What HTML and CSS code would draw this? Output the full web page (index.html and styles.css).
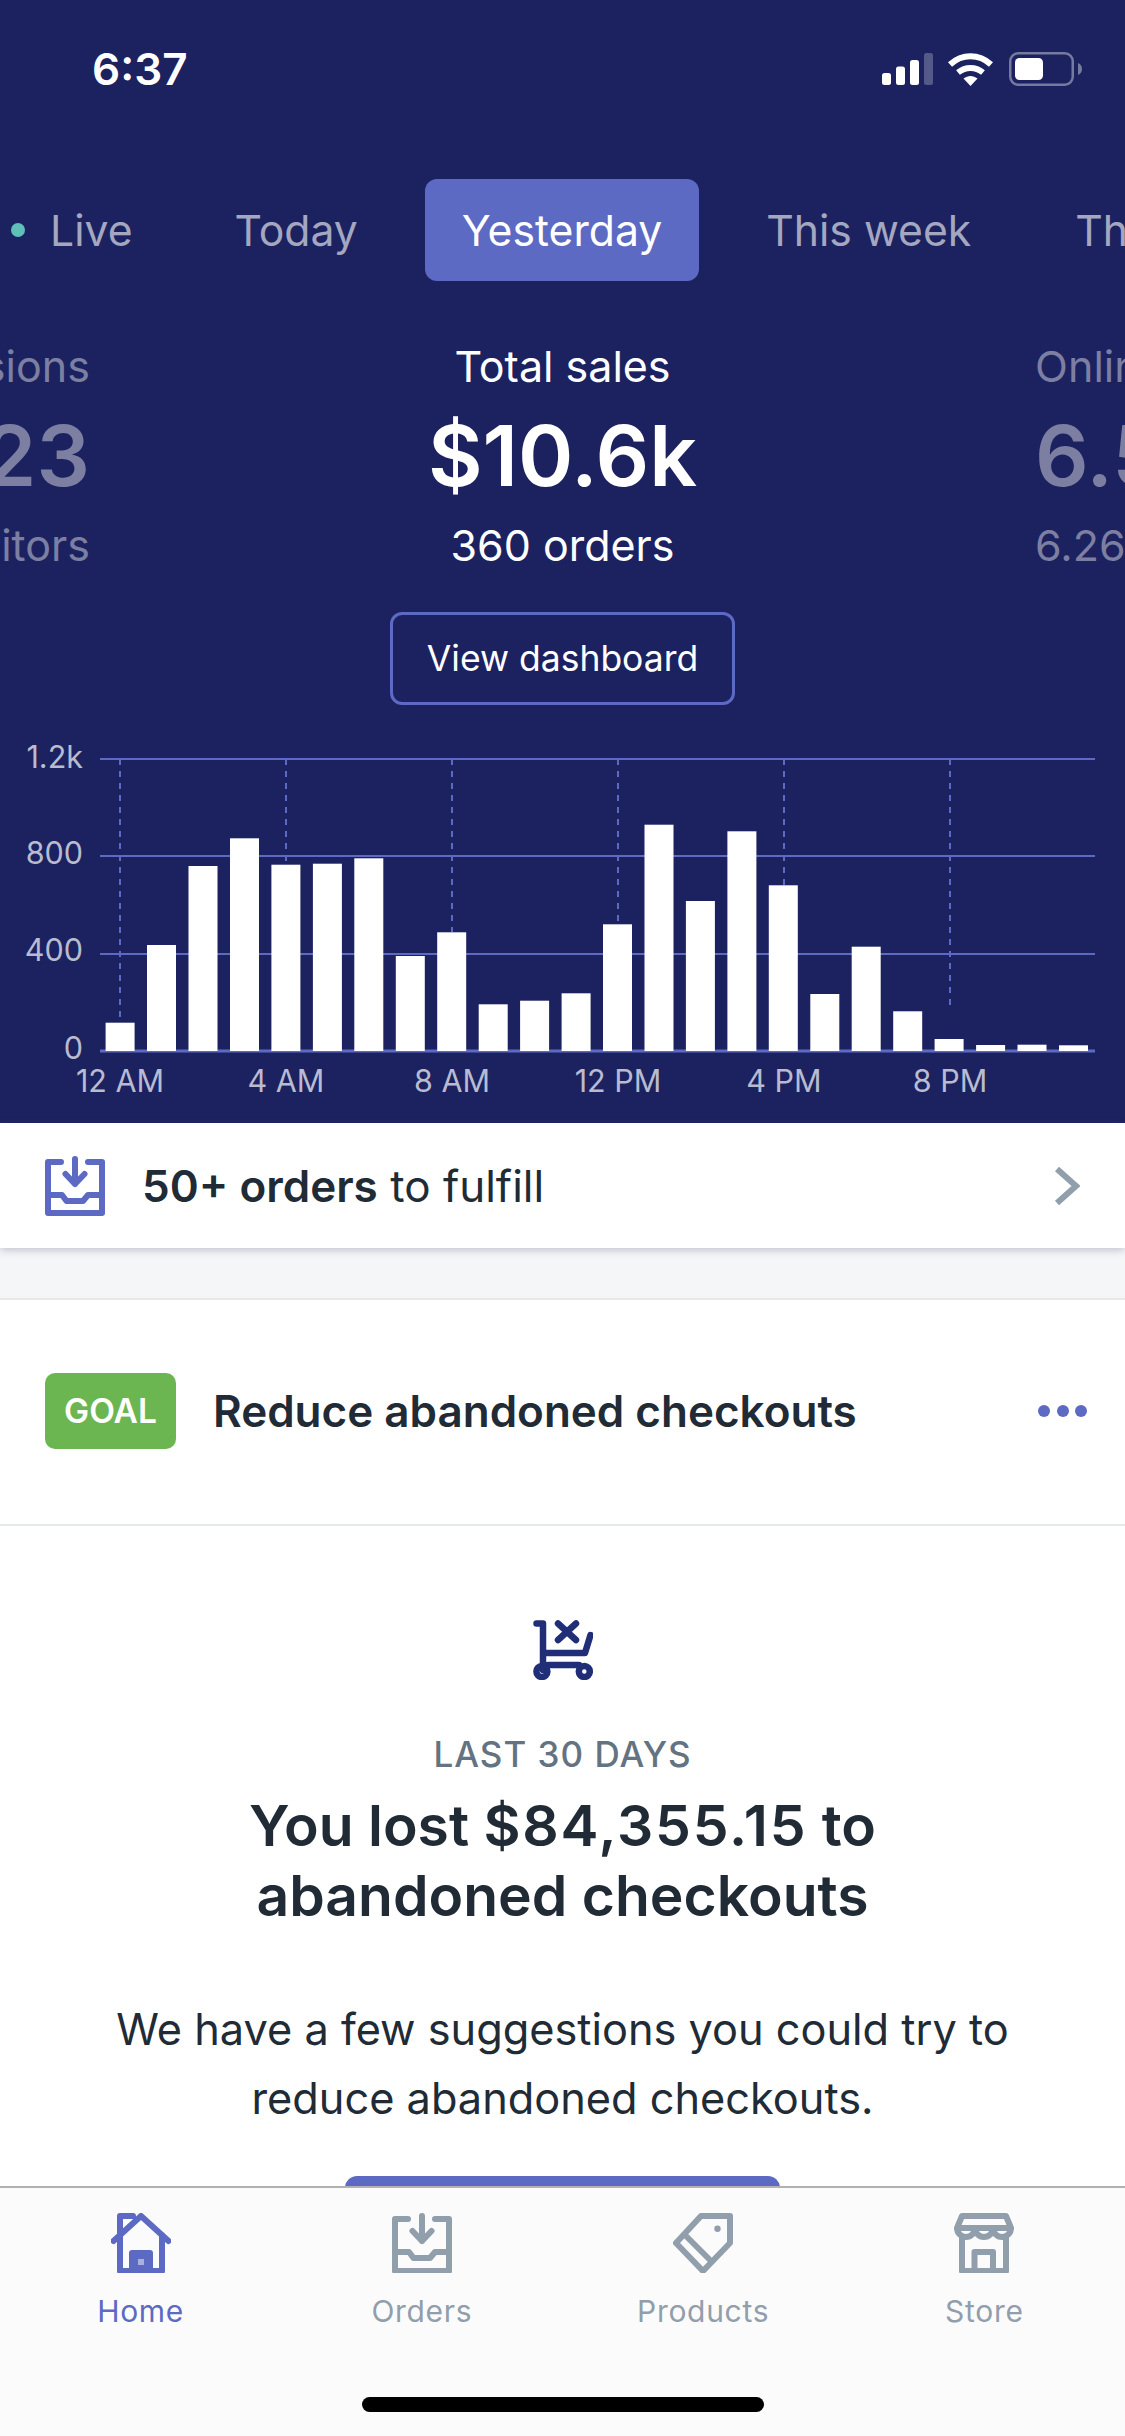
FILE: index.html
```html
<!DOCTYPE html>
<html lang="en">
<head>
  <meta charset="UTF-8">
  <meta name="viewport" content="width=device-width, initial-scale=1.0">
  <title>Home</title>
  <link rel="stylesheet" href="styles.css">
</head>
<body>
<div class="screen">
  <div class="content">
    <div class="hero">
      <div class="status-bar">
        <span class="time">6:37</span>
        <div class="status-icons">
          <svg class="signal" width="51" height="32" viewBox="0 0 51 32">
            <rect x="0" y="20" width="9" height="12" rx="2.5" fill="#fff"/>
            <rect x="14" y="13.5" width="9" height="18.5" rx="2.5" fill="#fff"/>
            <rect x="28" y="7" width="9" height="25" rx="2.5" fill="#fff"/>
            <rect x="42" y="0" width="9" height="32" rx="2.5" fill="#fff" opacity="0.25"/>
          </svg>
          <svg class="wifi" width="45" height="33" viewBox="0 0 45 33">
            <path d="M2 11.5C14 0.5 31 0.5 43 11.5" fill="none" stroke="#fff" stroke-width="6"/>
            <path d="M10 19.5C17.500 13.500 27.500 13.500 35 19.5" fill="none" stroke="#fff" stroke-width="6"/>
            <path d="M15.500 25.500C20 22 25 22 29.500 25.500L22.500 33Z" fill="#fff"/>
          </svg>
          <svg class="battery" width="73" height="34" viewBox="0 0 73 34">
            <rect x="1.250" y="1.250" width="62.500" height="31.500" rx="8" fill="none" stroke="#fff" stroke-opacity="0.4" stroke-width="2.500"/>
            <rect x="6" y="6" width="28" height="22" rx="4.500" fill="#fff"/>
            <path d="M69 11C71.500 12 73 14 73 17C73 20 71.500 22 69 23Z" fill="#fff" fill-opacity="0.4"/>
          </svg>
        </div>
      </div>

      <div class="tabs">
        <div class="tab tab-live"><span class="live-dot"></span>Live</div>
        <div class="tab">Today</div>
        <div class="tab tab-active">Yesterday</div>
        <div class="tab">This week</div>
        <div class="tab">This month</div>
      </div>

      <div class="stats">
        <div class="stat stat-side stat-left">
          <div class="stat-label">Sessions</div>
          <div class="stat-value">1,123</div>
          <div class="stat-sub">821 visitors</div>
        </div>
        <div class="stat">
          <div class="stat-label">Total sales</div>
          <div class="stat-value">$10.6k</div>
          <div class="stat-sub">360 orders</div>
        </div>
        <div class="stat stat-side stat-right">
          <div class="stat-label">Online store</div>
          <div class="stat-value">6.5k</div>
          <div class="stat-sub">6.26k visitors</div>
        </div>
      </div>

      <div class="dash-wrap">
        <button class="dash-btn">View dashboard</button>
      </div>

      <svg class="chart" width="1125" height="381" viewBox="0 0 1125 381">
        <g class="grid">
          <line x1="100" y1="23" x2="1095" y2="23"/>
          <line x1="100" y1="120" x2="1095" y2="120"/>
          <line x1="100" y1="218" x2="1095" y2="218"/>
          <line class="grid-base" x1="100" y1="315" x2="1095" y2="315"/>
        </g>
        <g class="ticks">
          <line x1="120" y1="23" x2="120" y2="287"/>
          <line x1="286" y1="23" x2="286" y2="129"/>
          <line x1="452" y1="23" x2="452" y2="196"/>
          <line x1="618" y1="23" x2="618" y2="188"/>
          <line x1="784" y1="23" x2="784" y2="149"/>
          <line x1="950" y1="23" x2="950" y2="275"/>
        </g>
        <g class="bars">
          <rect x="105.600" y="286.700" width="29" height="28.300"/>
          <rect x="147" y="209" width="29" height="106"/>
          <rect x="188.500" y="130" width="29" height="185"/>
          <rect x="230" y="102.300" width="29" height="212.700"/>
          <rect x="271.400" y="128.700" width="29" height="186.300"/>
          <rect x="312.900" y="127.700" width="29" height="187.300"/>
          <rect x="354.300" y="122.300" width="29" height="192.700"/>
          <rect x="395.800" y="220" width="29" height="95"/>
          <rect x="437.200" y="196.300" width="29" height="118.700"/>
          <rect x="478.700" y="268.300" width="29" height="46.700"/>
          <rect x="520.100" y="264.700" width="29" height="50.300"/>
          <rect x="561.600" y="257.300" width="29" height="57.700"/>
          <rect x="603" y="188.300" width="29" height="126.700"/>
          <rect x="644.500" y="88.700" width="29" height="226.300"/>
          <rect x="685.900" y="165" width="29" height="150"/>
          <rect x="727.400" y="95.300" width="29" height="219.700"/>
          <rect x="768.800" y="149.300" width="29" height="165.700"/>
          <rect x="810.300" y="258" width="29" height="57"/>
          <rect x="851.700" y="210.700" width="29" height="104.300"/>
          <rect x="893.200" y="275.300" width="29" height="39.700"/>
          <rect x="934.600" y="303" width="29" height="12"/>
          <rect x="976.100" y="309" width="29" height="6"/>
          <rect x="1017.500" y="308.700" width="29" height="6.300"/>
          <rect x="1059" y="309.300" width="29" height="5.700"/>
        </g>
        <g class="y-labels">
          <text x="83" y="32">1.2k</text>
          <text x="83" y="128">800</text>
          <text x="83" y="225">400</text>
          <text x="83" y="323">0</text>
        </g>
        <g class="x-labels">
          <text x="120" y="356">12 AM</text>
          <text x="286" y="356">4 AM</text>
          <text x="452" y="356">8 AM</text>
          <text x="618" y="356">12 PM</text>
          <text x="784" y="356">4 PM</text>
          <text x="950" y="356">8 PM</text>
        </g>
      </svg>
    </div>

    <div class="orders-row">
      <svg class="icon orders-icon" width="60" height="60" viewBox="0 0 60 60">
        <path d="M16 6H3V57H57V6H43M30 3V28M20.500 18L30 28L39.500 18M3 39H17L21.500 45H38L43 39H57"/>
      </svg>
      <div class="orders-text"><b>50+ orders</b> to fulfill</div>
      <svg class="chevron" width="26" height="40" viewBox="0 0 26 40">
        <path d="M3 3L22 20L3 37"/>
      </svg>
    </div>

    <div class="spacer"></div>

    <div class="goal-row">
      <span class="goal-badge">GOAL</span>
      <div class="goal-title">Reduce abandoned checkouts</div>
      <div class="dots"><span></span><span></span><span></span></div>
    </div>

    <div class="insight">
      <svg class="cart-icon" width="60" height="60" viewBox="0 0 60 60">
        <path d="M3.500 3.500H10V50M10 33H52L57.500 15M25 3.500L43 20M43 3.500L25 20M15 45H46"/>
        <circle cx="8.900" cy="51.500" r="5.500"/>
        <circle cx="51.300" cy="51.500" r="5.500"/>
      </svg>
      <div class="insight-label">LAST 30 DAYS</div>
      <h2 class="insight-title">You lost <span class="insight-amount">$84,355.15</span> to<br>abandoned checkouts</h2>
      <p class="insight-text">We have a few suggestions you could try to<br>reduce abandoned checkouts.</p>
      <button class="insight-btn">View suggestions</button>
    </div>
  </div>

  <div class="tabbar">
    <div class="tabbar-items">
      <div class="tabbar-item tabbar-item-active">
        <svg class="icon" width="60" height="60" viewBox="0 0 60 60">
          <path class="door-fill" d="M24 43H36V55H24Z"/>
          <path d="M2.500 28L30 3L57.500 28M9 20V3H22M9 22V58H51V22M21 58V40H39V58"/>
        </svg>
        <span>Home</span>
      </div>
      <div class="tabbar-item">
        <svg class="icon" width="60" height="60" viewBox="0 0 60 60">
          <path d="M16 6H3V58H57V6H43M30 3V28M20.500 18L30 28L39.500 18M3 39H17L21.500 45H38L43 39H57"/>
        </svg>
        <span>Orders</span>
      </div>
      <div class="tabbar-item">
        <svg class="icon" width="60" height="60" viewBox="0 0 60 60">
          <path d="M28 3H57V30L30 58L3 30ZM14 24L37 47"/>
          <circle class="tag-hole" cx="44.500" cy="15.700" r="3.200"/>
        </svg>
        <span>Products</span>
      </div>
      <div class="tabbar-item">
        <svg class="icon" width="60" height="60" viewBox="0 0 60 60">
          <path d="M8 3H52L57 15H3ZM3 15A9 9 0 0 0 21 15A9 9 0 0 0 39 15A9 9 0 0 0 57 15M8 25V58H52V25M20.500 58V39H39V58"/>
        </svg>
        <span>Store</span>
      </div>
    </div>
    <div class="home-indicator"></div>
  </div>
</div>
</body>
</html>
```

FILE: styles.css
```css
body {
  margin: 0;
  font-family: Inter, "Noto Sans", sans-serif;
  color: #212b36;
  background: #fff;
}

.screen {
  width: 1125px;
  height: 2436px;
  display: flex;
  flex-direction: column;
  overflow: hidden;
}

.content {
  flex: 1;
  min-height: 0;
  overflow: hidden;
}

/* hero */
.hero {
  background: #1c2260;
  height: 1123px;
  color: #fff;
  overflow: hidden;
}

.status-bar {
  height: 138px;
  display: flex;
  align-items: center;
  justify-content: space-between;
  padding: 0 43px 0 92px;
}

.time {
  font-size: 44px;
  font-weight: 600;
}

.status-icons {
  display: flex;
  align-items: center;
  gap: 15px;
}

.wifi {
  margin-right: 1px;
}

.tabs {
  margin-top: 41px;
  padding-left: 11px;
  display: flex;
  gap: 30px;
  height: 102px;
  white-space: nowrap;
  overflow: hidden;
}

.tab {
  flex: none;
  display: flex;
  align-items: center;
  padding: 0 37px;
  font-size: 42.700px;
  color: #a4a7bf;
  border-radius: 12px;
}

.tab-live {
  padding: 0 35px 0 0;
}

.live-dot {
  width: 14px;
  height: 14px;
  border-radius: 50%;
  background: #5fbfb9;
  margin-right: 25px;
}

.tab-active {
  background: #5c6ac4;
  color: #fff;
}

.stats {
  margin-top: 60px;
  display: grid;
  grid-template-columns: minmax(0, 1fr) auto minmax(0, 1fr);
  column-gap: 338px;
  overflow: hidden;
  white-space: nowrap;
  text-align: center;
}

.stat-side {
  color: #7c7fa2;
}

.stat-left {
  justify-self: end;
  text-align: right;
}

.stat-right {
  justify-self: start;
  text-align: left;
}

.stat-label,
.stat-sub {
  font-size: 43px;
  line-height: 50px;
}

.stat-value {
  font-size: 84px;
  font-weight: 600;
  line-height: 96px;
  margin: 17px 0 16px;
}

.dash-wrap {
  display: flex;
  justify-content: center;
  margin-top: 42px;
}

.dash-btn {
  width: 345px;
  height: 93px;
  background: none;
  border: 3px solid #5c6ac4;
  border-radius: 12px;
  color: #fff;
  font-family: inherit;
  font-size: 35.500px;
}

/* chart */
.chart {
  display: block;
  margin-top: 31px;
}

.grid line {
  stroke: #5c6ac4;
  stroke-width: 2;
}

.grid .grid-base {
  stroke-width: 3;
}

.ticks line {
  stroke: #5c6ac4;
  stroke-width: 2;
  stroke-dasharray: 6 6;
}

.bars rect {
  fill: #fff;
}

.y-labels text,
.x-labels text {
  font-size: 30.500px;
  fill: #b9bbd0;
}

.y-labels text {
  text-anchor: end;
}

.x-labels text {
  text-anchor: middle;
}

/* orders row */
.orders-row {
  height: 125px;
  padding: 0 45px;
  display: flex;
  align-items: center;
  box-shadow: 0 2px 8px rgba(66, 71, 112, 0.3);
  position: relative;
  background: #fff;
}

.orders-text {
  flex: 1;
  margin-left: 37px;
  font-size: 44px;
}

.orders-text b {
  font-weight: 600;
}

.icon path {
  fill: none;
  stroke: #919eab;
  stroke-width: 6;
  stroke-linejoin: round;
  stroke-linecap: round;
}

.orders-icon path {
  stroke: #5c6ac4;
}

.chevron path {
  fill: none;
  stroke: #919eab;
  stroke-width: 6;
}

.spacer {
  height: 50px;
  background: #f4f6f8;
}

/* goal */
.goal-row {
  height: 228px;
  padding: 0 38px 2px 45px;
  display: flex;
  align-items: center;
  border-top: 2px solid #e6e9ec;
  border-bottom: 2px solid #e6e9ec;
  box-sizing: border-box;
}

.goal-badge {
  width: 131px;
  height: 76px;
  display: flex;
  align-items: center;
  justify-content: center;
  background: #6cb651;
  border-radius: 10px;
  color: #fff;
  font-size: 33.500px;
  font-weight: 600;
}

.goal-title {
  flex: 1;
  margin-left: 37px;
  font-size: 44px;
  font-weight: 600;
}

.dots {
  display: flex;
  gap: 6.5px;
}

.dots span {
  width: 12px;
  height: 12px;
  border-radius: 50%;
  background: #5c6ac4;
}

/* insight */
.insight {
  padding-top: 94px;
  text-align: center;
}

.cart-icon {
  display: block;
  margin: 0 auto;
}

.cart-icon path,
.cart-icon circle {
  fill: none;
  stroke: #202e78;
  stroke-width: 6.500;
  stroke-linecap: round;
  stroke-linejoin: round;
}

.insight-label {
  margin-top: 52px;
  font-size: 35px;
  font-weight: 500;
  line-height: 44px;
  letter-spacing: 1px;
  color: #637381;
}

.insight-title {
  margin: 15px 0 0;
  font-size: 57px;
  font-weight: 600;
  line-height: 70px;
}

.insight-amount {
  letter-spacing: 1.800px;
}

.insight-text {
  margin: 64px 0 0;
  font-size: 43.300px;
  line-height: 69px;
}

.insight-btn {
  display: block;
  width: 435px;
  height: 93px;
  margin: 43px auto 0;
  background: #5c6ac4;
  border: none;
  border-radius: 12px;
  color: #fff;
  font-family: inherit;
  font-size: 36px;
}

/* bottom tabs */
.tabbar {
  flex: none;
  height: 250px;
  box-sizing: border-box;
  background: #fbfbfb;
  border-top: 2px solid #b2b2b2;
  padding-top: 25px;
  position: relative;
}

.tabbar-items {
  display: grid;
  grid-template-columns: repeat(4, 1fr);
}

.tabbar-item {
  display: flex;
  flex-direction: column;
  align-items: center;
  gap: 20px;
  font-size: 30px;
  line-height: 36px;
  letter-spacing: 0.7px;
  color: #919eab;
}

.tabbar-item-active {
  color: #5c6ac4;
}

.tabbar-item-active .icon path {
  stroke: #5c6ac4;
}

.icon .door-fill {
  fill: #aab0dd;
  stroke: none;
}

.tag-hole {
  fill: #919eab;
}

.home-indicator {
  width: 402px;
  height: 15px;
  margin: 68px auto 0;
  background: #000;
  border-radius: 8px;
}
```
